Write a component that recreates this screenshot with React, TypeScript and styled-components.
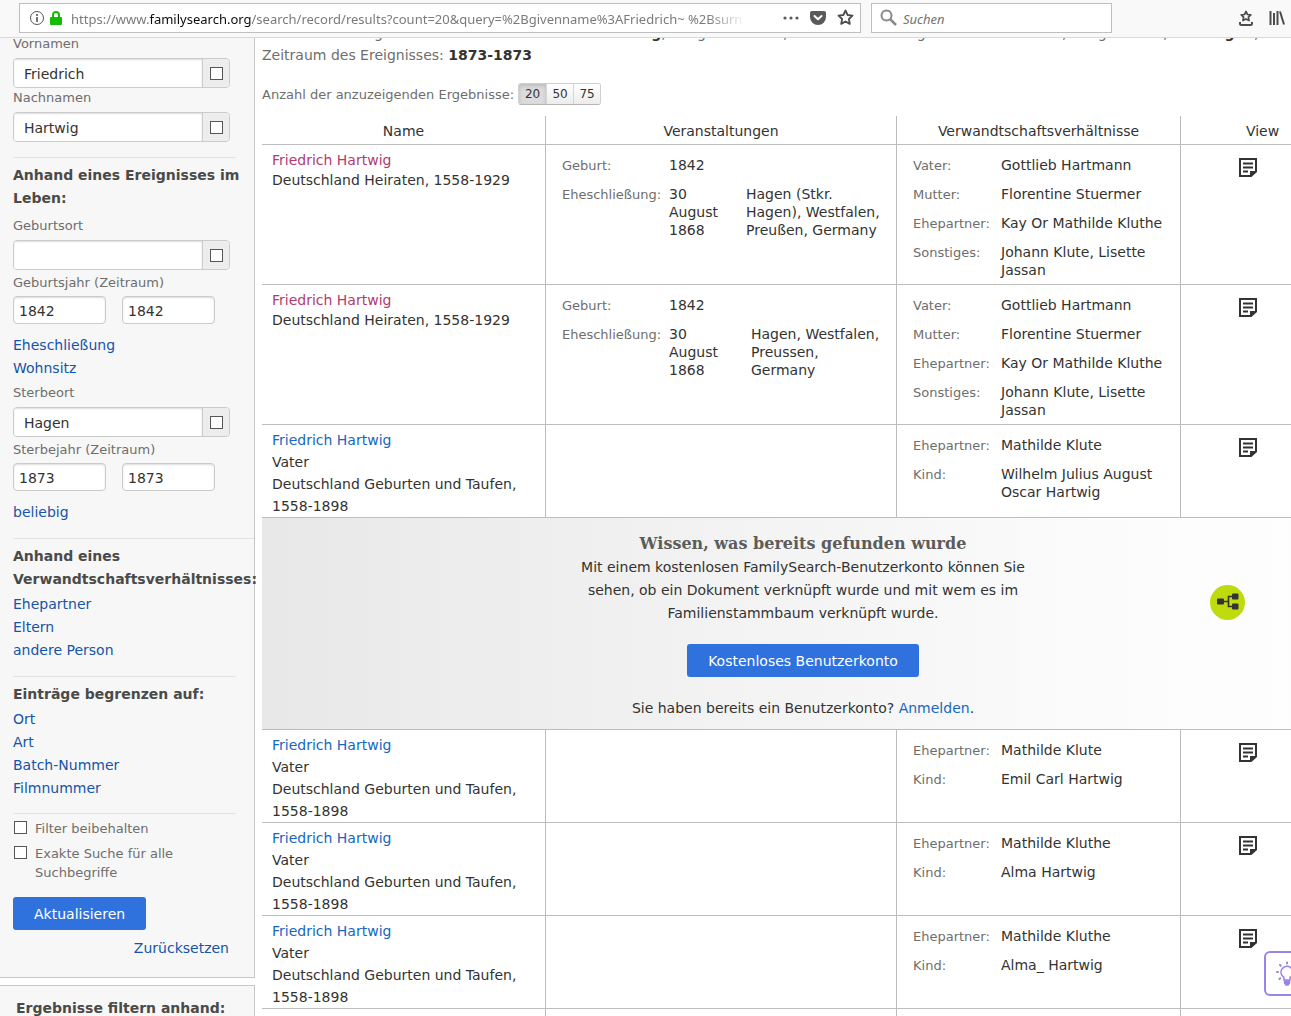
import React, { useState } from "react";
import styled, { createGlobalStyle, css } from "styled-components";

const GlobalStyle = createGlobalStyle`
  *, *::before, *::after { box-sizing: border-box; }
  html, body { margin: 0; height: 100%; overflow: hidden; background: #fff; }
  #root { height: 100%; }
  body, input, button { font-family: "DejaVu Sans", Verdana, sans-serif; font-size: 14px; color: #333331; }
`;

const uiFont = css`
  font-family: "Noto Sans", "Segoe UI", sans-serif;
  font-size: 13px;
`;

const Window = styled.div`
  position: relative;
  height: 100vh;
  display: flex;
  flex-direction: column;
  overflow: hidden;
`;

/* ---------- browser bar ---------- */

const Toolbar = styled.header`
  flex: none;
  display: flex;
  align-items: center;
  gap: 10px;
  height: 38px;
  padding: 0 6px 2px 19px;
  background: #f9f9f9;
  border-bottom: 1px solid #d9d9d9;
  z-index: 2;
`;

const AddressBar = styled.div`
  flex: 1;
  min-width: 0;
  display: flex;
  align-items: center;
  gap: 5px;
  height: 30px;
  padding: 0 6px 0 9px;
  background: #fff;
  border: 1px solid #bfbfbf;
`;

const Address = styled.div`
  ${uiFont}
  flex: 1;
  min-width: 0;
  margin-left: 4px;
  padding-top: 2px;
  overflow: hidden;
  white-space: nowrap;
  color: #7b7b7b;
  mask-image: linear-gradient(to right, #000 calc(100% - 70px), transparent calc(100% - 32px));
  b { font-weight: 400; color: #0c0c0d; }
`;

const SearchBox = styled.label`
  display: flex;
  align-items: center;
  gap: 6px;
  width: 241px;
  height: 30px;
  padding: 0 8px;
  background: #fff;
  border: 1px solid #bfbfbf;
`;

const SearchInput = styled.input`
  ${uiFont}
  flex: 1;
  min-width: 0;
  padding: 2px 0 0;
  border: 0;
  outline: 0;
  background: none;
  font-style: italic;
  &::placeholder { color: #737373; opacity: 1; }
`;

const IconButton = styled.button`
  display: flex;
  flex: none;
  padding: 0;
  border: 0;
  background: none;
  color: #4c4c4c;
`;

const AddressActions = styled.div`
  display: flex;
  align-items: center;
  gap: 11px;
`;

const ToolbarActions = styled.div`
  display: flex;
  align-items: center;
  gap: 16px;
  width: 163px;
  justify-content: flex-end;
`;

/* ---------- page ---------- */

const Page = styled.div`
  flex: 1;
  min-height: 0;
  display: flex;
  align-items: flex-start;
  gap: 7px;
  margin-top: -4px;
`;

const Sidebar = styled.aside`
  flex: none;
  width: 255px;
  display: flex;
  flex-direction: column;
  gap: 7px;
`;

const Panel = styled.section`
  padding: 0 0 17px 13px;
  background: #f7f7f7;
  border: solid #c6c6c6;
  border-width: 0 1px 1px 0;
`;

const FilterPanel = styled.section`
  padding: 11px 0 20px 16px;
  background: #f7f7f7;
  border: solid #c6c6c6;
  border-width: 1px 1px 0 0;
`;

const Heading = styled.h2`
  margin: 0;
  font-size: 14px;
  font-weight: 700;
  line-height: 23px;
  color: #4a4a48;
`;

const Divider = styled.hr<{ $full?: boolean; $top: number; $bottom: number }>`
  margin: ${(p) => p.$top}px ${(p) => (p.$full ? 0 : 18)}px ${(p) => p.$bottom}px 0;
  border: 0;
  border-top: 1px solid #e2e2e2;
`;

const FieldLabel = styled.label`
  display: block;
  font-size: 13px;
  line-height: 20px;
  color: #6e6e6c;
`;

const Field = styled.div<{ $top?: number }>`
  display: flex;
  flex-direction: column;
  gap: 4px;
  margin-top: ${(p) => p.$top ?? 0}px;
`;

const TextBox = styled.div`
  display: flex;
  width: 217px;
  height: 30px;
  border: 1px solid #cbcbcb;
  border-radius: 4px;
  overflow: hidden;
`;

const inset = css`
  background: #fff;
  box-shadow: inset 0 1px 2px rgba(0, 0, 0, 0.14);
  outline: 0;
`;

const TextInput = styled.input`
  ${inset}
  flex: 1;
  min-width: 0;
  padding: 2px 10px 0;
  border: 0;
`;

const ExactBox = styled.span`
  display: grid;
  place-items: center;
  width: 27px;
  background: #ededed;
  border-left: 1px solid #cbcbcb;
`;

const Tick = styled.input.attrs({ type: "checkbox" })`
  appearance: none;
  flex: none;
  width: 13px;
  height: 13px;
  margin: 0;
  background: #fff;
  border: 1px solid #555;
  &:checked { background: #2f72de; }
`;

const YearField = styled.fieldset`
  margin: 3px 0 10px;
  padding: 0;
  border: 0;
`;

const Years = styled.div`
  display: flex;
  gap: 16px;
  margin-top: 3px;
`;

const YearInput = styled.input`
  ${inset}
  width: 93px;
  height: 28px;
  padding: 2px 5px 0;
  border: 1px solid #cbcbcb;
  border-radius: 4px;
`;

const LinkList = styled.div<{ $top?: number }>`
  display: flex;
  flex-direction: column;
  align-items: flex-start;
  margin-top: ${(p) => p.$top ?? 0}px;
`;

const SideLink = styled.a`
  line-height: 23px;
  color: #1554a8;
  text-decoration: none;
`;

const Option = styled.label`
  display: flex;
  align-items: flex-start;
  gap: 8px;
  width: 190px;
  margin: 0 0 6px 1px;
  font-size: 13px;
  line-height: 19px;
  color: #6e6e6c;
  ${Tick} { margin-top: 2px; }
`;

const Options = styled.div`
  margin-bottom: 15px;
  ${Option}:last-child { margin-bottom: 0; }
`;

const PrimaryButton = styled.button`
  height: 33px;
  padding: 0 21px;
  border: 0;
  border-radius: 3px;
  background: #2f72de;
  color: #fff;
`;

const ResetRow = styled.div`
  display: flex;
  justify-content: flex-end;
  padding: 7px 25px 0 0;
`;

/* ---------- results ---------- */

const Main = styled.main`
  flex: 1;
  min-width: 0;
  margin-top: -12px;
`;

const Summary = styled.p`
  margin: 0;
  line-height: 22px;
  white-space: nowrap;
  color: #6e6e6c;
  b { color: #333331; }
`;

const CountRow = styled.div`
  display: flex;
  align-items: center;
  gap: 4px;
  margin: 17px 0 11px;
  font-size: 13px;
  color: #6e6e6c;
`;

const CountGroup = styled.div`
  display: flex;
  height: 22px;
  border: 1px solid #cfcfcf;
  border-bottom-color: #b5b5b5;
  border-radius: 3px;
  overflow: hidden;
`;

const CountButton = styled.button<{ $active: boolean }>`
  width: 27px;
  padding: 0;
  border: 0;
  border-left: 1px solid #d6d6d6;
  font-size: 12px;
  background: ${(p) => (p.$active ? "#dcdcdc" : "linear-gradient(#fff, #ececec)")};
  box-shadow: ${(p) => (p.$active ? "inset 0 2px 4px rgba(0,0,0,.15)" : "none")};
  &:first-child { border-left: 0; }
`;

const Results = styled.table`
  width: 100%;
  min-width: 1082px;
  table-layout: fixed;
  border-collapse: separate;
  border-spacing: 0;
`;

const Column = styled.col<{ $width?: number }>`
  width: ${(p) => (p.$width ? `${p.$width}px` : "auto")};
`;

const HeadCell = styled.th`
  height: 29px;
  padding: 2px 0 0;
  border-bottom: 1px solid #bdbdbd;
  font-weight: 400;
  & + & { border-left: 1px solid #bdbdbd; }
`;

const Cell = styled.td<{ $pad: string }>`
  padding: ${(p) => p.$pad};
  vertical-align: top;
  border-bottom: 1px solid #bdbdbd;
  & + & { border-left: 1px solid #bdbdbd; }
`;

const PersonLink = styled.a<{ $visited?: boolean }>`
  display: block;
  line-height: 20px;
  color: ${(p) => (p.$visited ? "#b23a6f" : "#1567c2")};
  text-decoration: none;
`;

const Source = styled.div<{ $loose: boolean }>`
  padding-top: ${(p) => (p.$loose ? 1 : 0)}px;
  line-height: ${(p) => (p.$loose ? 22 : 20)}px;
`;

const Facts = styled.dl`
  display: flex;
  flex-direction: column;
  gap: 10px;
  margin: 0;
  line-height: 18px;
`;

const Fact = styled.div<{ $columns: string }>`
  display: grid;
  grid-template-columns: ${(p) => p.$columns};
  dt { padding-top: 1px; font-size: 13px; color: #6e6e6c; }
  dd { margin: 0; }
`;

const DateText = styled.dd`
  padding-right: 24px;
`;

const Promo = styled.div`
  display: grid;
  grid-template-columns: 1fr 460px 1fr;
  align-items: center;
  padding: 14px 0 9px;
  background: linear-gradient(to right, #e8e8e8, #fdfdfd 85%, #fefefe);
`;

const PromoCell = styled.td`
  padding: 0;
  border-bottom: 1px solid #bdbdbd;
`;

const PromoText = styled.div`
  grid-column: 2;
  display: flex;
  flex-direction: column;
  align-items: center;
  text-align: center;
  line-height: 23px;
`;

const PromoTitle = styled.h3`
  margin: 0;
  font-family: "DejaVu Serif", serif;
  font-size: 16px;
  font-weight: 700;
  line-height: 24px;
  color: #5c5c5a;
`;

const PromoCopy = styled.p`
  margin: 0 0 19px;
`;

const SignIn = styled.p`
  margin: 20px 0 0;
  a { color: #1567c2; text-decoration: none; }
`;

const TreeBadge = styled.span`
  display: grid;
  place-items: center;
  justify-self: end;
  width: 35px;
  height: 35px;
  margin: 0 99px 48px 0;
  border-radius: 50%;
  background: #bfdb0d;
`;

const Hint = styled.button`
  position: absolute;
  right: -17px;
  bottom: 20px;
  display: flex;
  align-items: center;
  width: 44px;
  height: 45px;
  padding: 0 0 0 8px;
  border: 2px solid #9a84e8;
  border-radius: 6px;
  background: #fff;
  color: #9a84e8;
`;

/* ---------- icons ---------- */

const NoteIcon = () => (
  <svg width="18" height="20" viewBox="0 0 18 20" fill="none" stroke="#333331" role="img" aria-label="Eintrag">
    <path d="M1 1h16v12.5L12 18H1z" strokeWidth="2" />
    <path d="M11 19v-6H18z" fill="#333331" stroke="none" />
    <path d="M4 5.500h10M4 9.500h10M4 13.500h5" strokeWidth="2" />
  </svg>
);

const TreeIcon = () => (
  <svg width="22" height="18" viewBox="0 0 22 18" fill="#333331" aria-hidden="true">
    <rect x="0" y="5.500" width="7" height="6" rx="1" />
    <rect x="15" y="0.500" width="6.500" height="6" rx="1" />
    <rect x="15" y="10.500" width="6.500" height="6" rx="1" />
    <path d="M7 8.500h4M15 3.500h-3.500v10H15" fill="none" stroke="#333331" strokeWidth="1.600" />
  </svg>
);

const InfoIcon = () => (
  <svg width="16" height="16" viewBox="0 0 16 16" fill="none" stroke="#555" aria-hidden="true">
    <circle cx="8" cy="8" r="6.500" />
    <path d="M8 4v2M8 7v5" strokeWidth="1.600" />
  </svg>
);

const LockIcon = () => (
  <svg width="12" height="16" viewBox="0 0 12 16" aria-hidden="true">
    <path d="M3 8V5a3 3 0 0 1 6 0v3" fill="none" stroke="#12bc00" strokeWidth="2" />
    <rect x="0" y="7" width="12" height="8" rx="1" fill="#12bc00" />
  </svg>
);

const PocketIcon = () => (
  <svg width="16" height="16" viewBox="0 0 16 16" aria-hidden="true">
    <path d="M2 1h12a2 2 0 0 1 2 2v4a8 8 0 0 1-16 0V3a2 2 0 0 1 2-2z" fill="#5a5a5a" />
    <path d="M4.500 6 8 9.300 11.500 6" fill="none" stroke="#fff" strokeWidth="2" strokeLinecap="round" strokeLinejoin="round" />
  </svg>
);

const StarIcon = () => (
  <svg width="17" height="17" viewBox="0 0 17 17" fill="none" stroke="currentColor" strokeWidth="1.800" strokeLinejoin="round" aria-hidden="true">
    <path d="m8.500 1.500 2.100 4.500 4.900.600-3.600 3.400.9 4.900-4.300-2.400-4.300 2.400.9-4.900L1.500 6.600 6.400 6z" />
  </svg>
);

const DotsIcon = () => (
  <svg width="16" height="4" viewBox="0 0 16 4" fill="#5a5a5a" aria-hidden="true">
    <circle cx="2" cy="2" r="1.600" />
    <circle cx="8" cy="2" r="1.600" />
    <circle cx="14" cy="2" r="1.600" />
  </svg>
);

const MagnifierIcon = () => (
  <svg width="17" height="17" viewBox="0 0 17 17" fill="none" stroke="#8a8a8a" strokeWidth="2" aria-hidden="true">
    <circle cx="6.500" cy="6.500" r="5" />
    <path d="m10 10 6 6" strokeWidth="2.500" />
  </svg>
);

const SavedIcon = () => (
  <svg width="14" height="16" viewBox="0 0 14 16" fill="none" stroke="currentColor" aria-hidden="true">
    <path d="m7 1.500 1.500 3 3.300.4-2.400 2.300.6 3.300-3-1.600-3 1.600.6-3.300L2.200 4.900l3.300-.4z" strokeWidth="1.700" strokeLinejoin="round" />
    <path d="M1 12v1.500Q1 15 2.500 15h9q1.500 0 1.500-1.500V12" strokeWidth="2" />
  </svg>
);

const LibraryIcon = () => (
  <svg width="16" height="16" viewBox="0 0 16 16" fill="none" stroke="currentColor" strokeWidth="2" aria-hidden="true">
    <path d="M1.500 1v14M5 3v12M8.500 1v14M11 1.500l4 13" />
  </svg>
);

const BulbIcon = () => (
  <svg width="26" height="26" viewBox="0 0 26 26" fill="none" stroke="currentColor" strokeWidth="1.500" strokeLinecap="round" aria-hidden="true">
    <path d="M10 19v-2.500a6 6 0 1 1 6 0V19z" />
    <path d="M10.500 20h5v2l-1.500 2h-2l-1.500-2z" fill="currentColor" />
    <path d="M13 1.500v1M6 4l.7.700M20 4l-.7.700M3 11h1M23 11h-1M5.500 18l.7-.700M20.500 18l-.7-.700" strokeWidth="2" />
  </svg>
);

/* ---------- data ---------- */

type EventFact = { label: string; date: string; place?: string };
type Person = {
  visited?: boolean;
  role?: string;
  source: string;
  placeOffset?: number;
  events: EventFact[];
  relatives: [string, string][];
};

const marriage = "Deutschland Heiraten, 1558-1929";
const baptism = "Deutschland Geburten und Taufen, 1558-1898";
const kin: [string, string][] = [
  ["Vater:", "Gottlieb Hartmann"],
  ["Mutter:", "Florentine Stuermer"],
  ["Ehepartner:", "Kay Or Mathilde Kluthe"],
  ["Sonstiges:", "Johann Klute, Lisette Jassan"],
];

const beforePromo: Person[] = [
  {
    visited: true,
    source: marriage,
    placeOffset: 77,
    events: [
      { label: "Geburt:", date: "1842" },
      { label: "Eheschließung:", date: "30 August 1868", place: "Hagen (Stkr. Hagen), Westfalen, Preußen, Germany" },
    ],
    relatives: kin,
  },
  {
    visited: true,
    source: marriage,
    placeOffset: 82,
    events: [
      { label: "Geburt:", date: "1842" },
      { label: "Eheschließung:", date: "30 August 1868", place: "Hagen, Westfalen, Preussen, Germany" },
    ],
    relatives: kin,
  },
  {
    role: "Vater",
    source: baptism,
    events: [],
    relatives: [["Ehepartner:", "Mathilde Klute"], ["Kind:", "Wilhelm Julius August Oscar Hartwig"]],
  },
];

const child = (spouse: string, name: string): Person => ({
  role: "Vater",
  source: baptism,
  events: [],
  relatives: [["Ehepartner:", spouse], ["Kind:", name]],
});

const afterPromo: Person[] = [
  child("Mathilde Klute", "Emil Carl Hartwig"),
  child("Mathilde Kluthe", "Alma Hartwig"),
  child("Mathilde Kluthe", "Alma_ Hartwig"),
];

/* ---------- parts ---------- */

const ExactField = ({ id, label, value, top }: { id: string; label: string; value: string; top?: number }) => (
  <Field $top={top}>
    <FieldLabel htmlFor={id}>{label}</FieldLabel>
    <TextBox>
      <TextInput id={id} defaultValue={value} />
      <ExactBox>
        <Tick aria-label={`${label} exakt`} />
      </ExactBox>
    </TextBox>
  </Field>
);

const YearRange = ({ id, label, year }: { id: string; label: string; year: string }) => (
  <YearField>
    <FieldLabel htmlFor={id}>{label}</FieldLabel>
    <Years>
      <YearInput id={id} defaultValue={year} />
      <YearInput aria-label={`${label} bis`} defaultValue={year} />
    </Years>
  </YearField>
);

const Links = ({ items, top }: { items: string[]; top?: number }) => (
  <LinkList $top={top}>
    {items.map((item) => (
      <SideLink href="#" key={item}>{item}</SideLink>
    ))}
  </LinkList>
);

const PersonRow = ({ person }: { person: Person }) => (
  <tr>
    <Cell $pad="5px 10px 0">
      <PersonLink href="#" $visited={person.visited}>Friedrich Hartwig</PersonLink>
      <Source $loose={!!person.role}>
        {person.role && <div>{person.role}</div>}
        {person.source}
      </Source>
    </Cell>
    <Cell $pad="11px 14px 5px 16px">
      <Facts>
        {person.events.map((e) => (
          <Fact key={e.label} $columns={`107px ${person.placeOffset}px 1fr`}>
            <dt>{e.label}</dt>
            <DateText>{e.date}</DateText>
            {e.place && <dd>{e.place}</dd>}
          </Fact>
        ))}
      </Facts>
    </Cell>
    <Cell $pad="11px 14px 5px 16px">
      <Facts>
        {person.relatives.map(([label, name]) => (
          <Fact key={label} $columns="88px 1fr">
            <dt>{label}</dt>
            <dd>{name}</dd>
          </Fact>
        ))}
      </Facts>
    </Cell>
    <Cell $pad="13px 0 0 58px">
      <NoteIcon />
    </Cell>
  </tr>
);

export default function App() {
  const [count, setCount] = useState(20);
  return (
    <Window>
      <GlobalStyle />
      <Toolbar>
        <AddressBar>
          <InfoIcon />
          <LockIcon />
          <Address>
            https://www.<b>familysearch.org</b>/search/record/results?count=20&amp;query=%2Bgivenname%3AFriedrich~ %2Bsurn
          </Address>
          <AddressActions>
            <IconButton aria-label="Seitenaktionen"><DotsIcon /></IconButton>
            <IconButton aria-label="Pocket"><PocketIcon /></IconButton>
            <IconButton aria-label="Lesezeichen"><StarIcon /></IconButton>
          </AddressActions>
        </AddressBar>
        <SearchBox>
          <MagnifierIcon />
          <SearchInput placeholder="Suchen" aria-label="Suchen" />
        </SearchBox>
        <ToolbarActions>
          <IconButton aria-label="Gespeichert"><SavedIcon /></IconButton>
          <IconButton aria-label="Bibliothek"><LibraryIcon /></IconButton>
        </ToolbarActions>
      </Toolbar>

      <Page>
        <Sidebar>
          <Panel>
            <ExactField id="given" label="Vornamen" value="Friedrich" />
            <ExactField id="surname" label="Nachnamen" value="Hartwig" />
            <Divider $top={15} $bottom={6} />
            <Heading>Anhand eines Ereignisses im Leben:</Heading>
            <ExactField id="birthplace" label="Geburtsort" value="" top={6} />
            <YearRange id="birthyear" label="Geburtsjahr (Zeitraum)" year="1842" />
            <Links items={["Eheschließung", "Wohnsitz"]} />
            <ExactField id="deathplace" label="Sterbeort" value="Hagen" top={3} />
            <YearRange id="deathyear" label="Sterbejahr (Zeitraum)" year="1873" />
            <Links items={["beliebig"]} />
            <Divider $full $top={14} $bottom={6} />
            <Heading>Anhand eines Verwandtschaftsverhältnisses:</Heading>
            <Links items={["Ehepartner", "Eltern", "andere Person"]} top={2} />
            <Divider $top={14} $bottom={6} />
            <Heading>Einträge begrenzen auf:</Heading>
            <Links items={["Ort", "Art", "Batch-Nummer", "Filmnummer"]} top={2} />
            <Divider $top={13} $bottom={5} />
            <Options>
              <Option><Tick />Filter beibehalten</Option>
              <Option><Tick />Exakte Suche für alle Suchbegriffe</Option>
            </Options>
            <PrimaryButton>Aktualisieren</PrimaryButton>
            <ResetRow><SideLink href="#">Zurücksetzen</SideLink></ResetRow>
          </Panel>
          <FilterPanel>
            <Heading>Ergebnisse filtern anhand:</Heading>
          </FilterPanel>
        </Sidebar>

        <Main>
          <Summary>
            1-20 von 148 Ergebnissen für Name: <b>Friedrich Hartwig</b>, Ereignis: <b>Leben</b>, Zeitraum des
            Ereignisses: <b>1842-1842</b>, Ereignis: <b>Tod</b>, Ort: <b>Hagen</b>,
          </Summary>
          <Summary>Zeitraum des Ereignisses: <b>1873-1873</b></Summary>
          <CountRow>
            Anzahl der anzuzeigenden Ergebnisse:
            <CountGroup>
              {[20, 50, 75].map((n) => (
                <CountButton key={n} $active={n === count} onClick={() => setCount(n)}>{n}</CountButton>
              ))}
            </CountGroup>
          </CountRow>
          <Results>
            <colgroup>
              <Column $width={283} />
              <Column $width={351} />
              <Column $width={284} />
              <Column />
            </colgroup>
            <thead>
              <tr>
                <HeadCell>Name</HeadCell>
                <HeadCell>Veranstaltungen</HeadCell>
                <HeadCell>Verwandtschaftsverhältnisse</HeadCell>
                <HeadCell>View</HeadCell>
              </tr>
            </thead>
            <tbody>
              {beforePromo.map((p, i) => <PersonRow key={i} person={p} />)}
              <tr>
                <PromoCell colSpan={4}>
                  <Promo>
                    <PromoText>
                      <PromoTitle>Wissen, was bereits gefunden wurde</PromoTitle>
                      <PromoCopy>
                        Mit einem kostenlosen FamilySearch-Benutzerkonto können Sie sehen, ob ein Dokument verknüpft
                        wurde und mit wem es im Familienstammbaum verknüpft wurde.
                      </PromoCopy>
                      <PrimaryButton>Kostenloses Benutzerkonto</PrimaryButton>
                      <SignIn>Sie haben bereits ein Benutzerkonto? <a href="#">Anmelden</a>.</SignIn>
                    </PromoText>
                    <TreeBadge><TreeIcon /></TreeBadge>
                  </Promo>
                </PromoCell>
              </tr>
              {afterPromo.map((p, i) => <PersonRow key={i} person={p} />)}
              <tr>
                <Cell $pad="10px" />
                <Cell $pad="10px" />
                <Cell $pad="10px" />
                <Cell $pad="10px" />
              </tr>
            </tbody>
          </Results>
        </Main>
      </Page>
      <Hint aria-label="Tipps"><BulbIcon /></Hint>
    </Window>
  );
}
